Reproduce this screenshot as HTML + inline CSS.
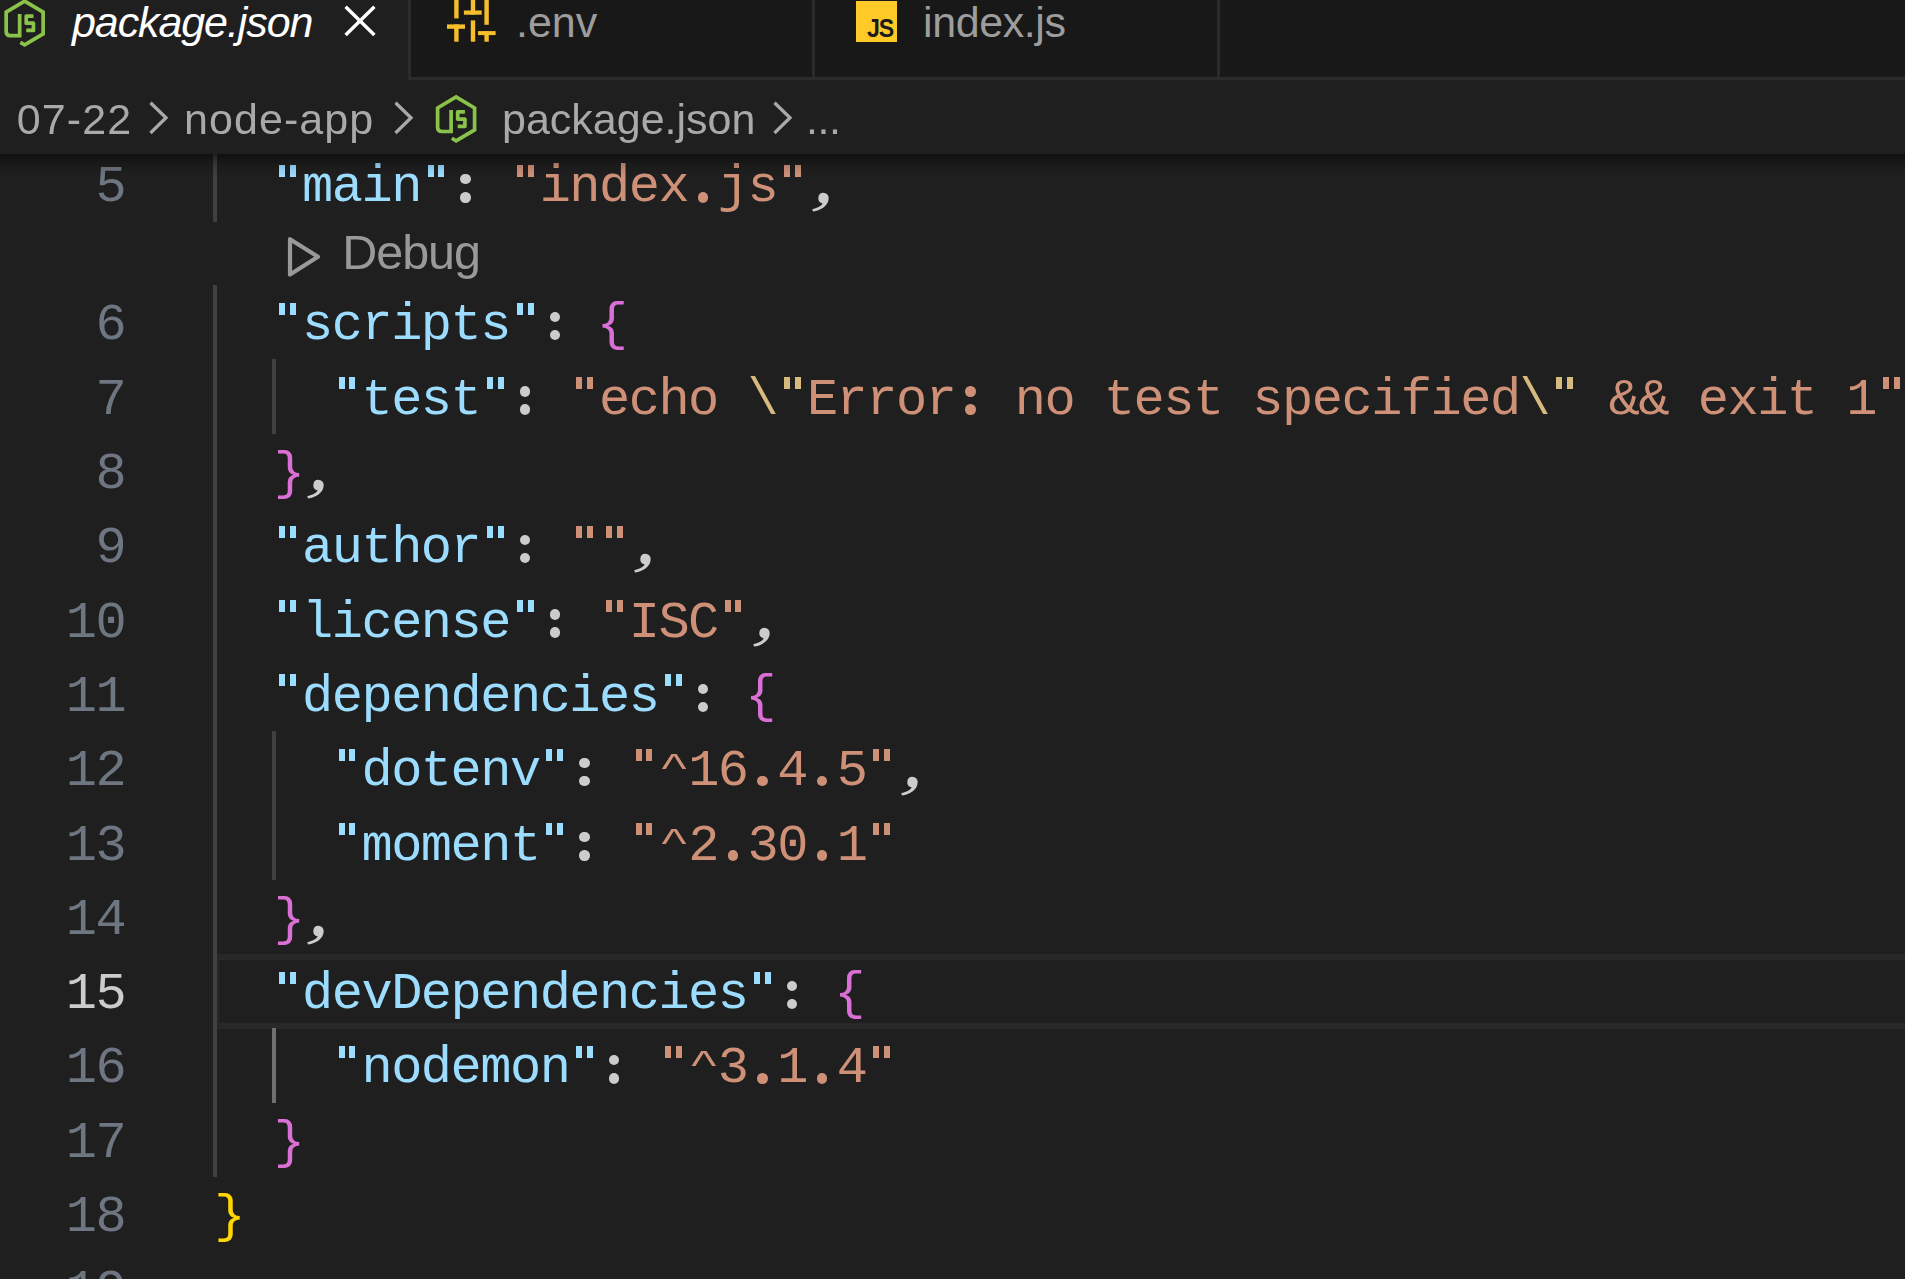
<!DOCTYPE html>
<html>
<head>
<meta charset="utf-8">
<title>package.json - node-app</title>
<style>
html,body{margin:0;padding:0;background:#1f1f1f;}
#wrap{position:absolute;left:0;top:0;width:1905px;height:1279px;overflow:hidden;filter:blur(0.7px);}
body{width:1905px;height:1279px;overflow:hidden;background:#1f1f1f;position:relative;font-family:"Liberation Sans",sans-serif;}
.abs{position:absolute;}
/* ---------- tab bar ---------- */
#tabbar{position:absolute;left:0;top:0;width:1905px;height:76.6px;background:#181818;border-bottom:3.6px solid #2b2b2b;}
#tab1{position:absolute;left:0;top:0;width:407.6px;height:80.4px;background:#1f1f1f;}
.tsep{position:absolute;top:0;width:3.6px;height:78px;background:#2b2b2b;}
.tlabel{position:absolute;white-space:pre;font-size:43px;line-height:50px;height:50px;color:#9d9d9d;}
/* ---------- breadcrumb ---------- */
.bc{position:absolute;white-space:pre;font-size:43px;line-height:50px;height:50px;color:#a9a9a9;}
/* ---------- editor ---------- */
#editor{position:absolute;left:0;top:153.8px;width:1905px;height:1126px;overflow:hidden;}
#shadow{position:absolute;left:0;top:0;width:1905px;height:21px;box-shadow:#000 0 21px 21px -21px inset;}
.ln{position:absolute;left:0;width:125.1px;text-align:right;font-family:"Liberation Mono",monospace;font-size:52px;letter-spacing:-1.51px;line-height:74.33px;height:74.33px;color:#6e7681;white-space:pre;}
.ln.act{color:#cccccc;}
.cl{position:absolute;left:213px;font-family:"Liberation Mono",monospace;font-size:52px;letter-spacing:-1.51px;line-height:74.33px;height:74.33px;color:#cccccc;white-space:pre;}
.k{color:#9cdcfe;}
.s{color:#ce9178;}
.e{color:#d7ba7d;}
.b1{color:#ffd700;}
.b2{color:#da70d6;}
.pd,.pm{display:inline-block;position:relative;color:transparent;}
.pd::after{content:"";position:absolute;left:9.9px;top:40.9px;width:10.3px;height:10.3px;border-radius:50%;background:currentColor;}
.pd.pc::before{content:"";position:absolute;left:9.9px;top:22.7px;width:10.3px;height:10.3px;border-radius:50%;background:currentColor;}
.cl .pd::after,.cl .pd::before{background:#cccccc;}
.cl .s .pd::after,.cl .s .pd::before{background:#ce9178;}
.pm svg{position:absolute;left:0;top:38.8px;overflow:visible;}
.q{display:inline-block;width:29.69px;height:36.5px;vertical-align:baseline;background:linear-gradient(currentColor,currentColor) 6.8px 0/6.3px 12.2px no-repeat,linear-gradient(currentColor,currentColor) 17.6px 0/6.3px 12.2px no-repeat;}
.cl i{font-style:normal;position:relative;}
.cl i.o{left:-2.4px;}
.cl i.c{left:1.3px;}
.ca{display:inline-block;transform-origin:0 19.2px;transform:translateY(2.4px) scaleY(0.64);}
.g{position:absolute;width:3.8px;background:#404040;}
.g.a{background:#707070;}
#curline{position:absolute;left:213px;width:1700px;height:74.33px;box-sizing:border-box;border:6.8px solid #282828;}
#dbg{font-size:48.5px;letter-spacing:-1.05px;line-height:56px;color:#999999;white-space:pre;}
</style>
</head>
<body>
<div id="wrap">

<!-- TAB BAR -->
<div id="tabbar"></div>
<div id="tab1"></div>
<div class="tsep" style="left:407.6px;"></div>
<div class="tsep" style="left:811.9px;"></div>
<div class="tsep" style="left:1216.6px;"></div>

<div class="tlabel" id="t1" style="left:72px;top:-2.6px;color:#ffffff;font-style:italic;letter-spacing:-1.09px;">package.json</div>
<div class="tlabel" id="t2" style="left:516px;top:-2.6px;">.env</div>
<div class="tlabel" id="t3" style="left:923px;top:-2.6px;letter-spacing:-0.4px;">index.js</div>

<!-- BREADCRUMB -->
<div class="bc" id="b1" style="left:16.7px;top:93.9px;letter-spacing:1.1px;">07-22</div>
<div class="bc" id="b2" style="left:184px;top:93.9px;letter-spacing:1.07px;">node-app</div>
<div class="bc" id="b3" style="left:502px;top:93.9px;">package.json</div>
<div class="bc" id="b4" style="left:806px;top:93.9px;letter-spacing:-0.5px;">...</div>

<!-- ICONS -->
<svg width="0" height="0" style="position:absolute"><defs><g id="node" fill="none" stroke="#8bc34a" stroke-width="3.7"><path d="M-4.30 19.35 L0 21.90 L18.49 10.95 L18.49 -10.95 L0 -21.90 L-18.49 -10.95 L-18.49 8.40 Q-18.49 12.60 -14.29 12.60 L-5.00 12.60 L-5.00 -8.90" stroke-linejoin="miter" stroke-miterlimit="10" stroke-linecap="butt"/><path d="M8.80 -6.95 H1.60 V0.20 H8.80 V7.40 H1.60" stroke-linejoin="round" stroke-linecap="butt"/></g><path id="comma" fill="#cccccc" d="M16.4 -9.2 a5.3 5.3 0 0 1 5.3 5.3 C21.7 3.6 14 8.6 6 9.6 L5.3 7.1 C10.5 6.1 14.6 4 15.6 1.3 a5.3 5.3 0 0 1 0.8 -10.5 Z"/><g id="chev" fill="none" stroke="#a9a9a9" stroke-width="3.3" stroke-linecap="butt" stroke-linejoin="miter"><path d="M2.5 1.8 L18 16.8 L2.5 32"/></g></defs></svg>
<svg class="abs" style="left:0;top:0;overflow:visible" width="60" height="60"><use href="#node" x="24.65" y="23"/></svg>
<svg class="abs" style="left:426px;top:88px;overflow:visible" width="60" height="62"><use href="#node" x="30.1" y="30.9"/></svg>
<svg class="abs" style="left:340px;top:0" width="40" height="42"><path d="M5.6 6.8 L34.4 35 M34.4 6.8 L5.6 35" stroke="#ffffff" stroke-width="3.4" fill="none"/></svg>
<svg class="abs" style="left:440px;top:0" width="60" height="46" fill="#f7be2c"><rect x="14.2" y="-2.0" width="4.4" height="20.4"/><rect x="7.0" y="24.4" width="18.0" height="4.4"/><rect x="14.2" y="24.4" width="4.4" height="17.3"/><rect x="30.8" y="-2.0" width="4.4" height="16.6"/><rect x="23.9" y="10.5" width="17.8" height="4.2"/><rect x="30.8" y="20.4" width="4.4" height="21.3"/><rect x="44.4" y="-2.0" width="4.4" height="26.8"/><rect x="38.0" y="31.1" width="17.6" height="4.0"/><rect x="44.4" y="31.1" width="4.4" height="10.6"/></svg>
<div class="abs" style="left:856px;top:1px;width:40.6px;height:40.6px;background:#ffca28;"></div>
<div class="abs" id="jsl" style="left:866.5px;top:15.3px;font-size:25px;line-height:26px;font-weight:bold;color:#1c1c1c;letter-spacing:-1.2px;transform:scaleX(0.93);transform-origin:0 0;">JS</div>
<svg class="abs" style="left:148.0px;top:100.5px;overflow:visible" width="22" height="36"><use href="#chev"/></svg>
<svg class="abs" style="left:393.3px;top:100.5px;overflow:visible" width="22" height="36"><use href="#chev"/></svg>
<svg class="abs" style="left:772.2px;top:100.5px;overflow:visible" width="22" height="36"><use href="#chev"/></svg>

<!-- EDITOR -->
<div id="editor">
<div id="curline" style="top:800.4px;"></div>
<div class="g" style="left:213.0px;top:0.0px;height:67.9px;"></div>
<div class="g" style="left:213.0px;top:131.4px;height:892.0px;"></div>
<div class="g" style="left:272.4px;top:205.7px;height:74.3px;"></div>
<div class="g" style="left:272.4px;top:577.4px;height:148.7px;"></div>
<div class="g a" style="left:272.4px;top:874.7px;height:74.3px;"></div>
<div class="ln" style="top:-2.40px;">5</div>
<div class="cl" id="L5" style="top:-2.40px;">  <span class="k"><span class="q"></span>main<span class="q"></span></span><span class="pd pc">:</span> <span class="s"><span class="q"></span>index<span class="pd">.</span>js<span class="q"></span></span><span class="pm">,<svg width="30" height="30" viewBox="0 -12 30 30"><use href="#comma"/></svg></span></div>
<div class="ln" style="top:135.40px;">6</div>
<div class="cl" id="L6" style="top:135.40px;">  <span class="k"><span class="q"></span>scripts<span class="q"></span></span><span class="pd pc">:</span> <span class="b2"><i class="o">{</i></span></div>
<div class="ln" style="top:209.73px;">7</div>
<div class="cl" id="L7" style="top:209.73px;">    <span class="k"><span class="q"></span>test<span class="q"></span></span><span class="pd pc">:</span> <span class="s"><span class="q"></span>echo </span><span class="e">\<span class="q"></span></span><span class="s">Error<span class="pd pc">:</span> no test specified</span><span class="e">\<span class="q"></span></span><span class="s"> &amp;&amp; exit 1<span class="q"></span></span></div>
<div class="ln" style="top:284.06px;">8</div>
<div class="cl" id="L8" style="top:284.06px;">  <span class="b2"><i class="c">}</i></span><span class="pm">,<svg width="30" height="30" viewBox="0 -12 30 30"><use href="#comma"/></svg></span></div>
<div class="ln" style="top:358.39px;">9</div>
<div class="cl" id="L9" style="top:358.39px;">  <span class="k"><span class="q"></span>author<span class="q"></span></span><span class="pd pc">:</span> <span class="s"><span class="q"></span><span class="q"></span></span><span class="pm">,<svg width="30" height="30" viewBox="0 -12 30 30"><use href="#comma"/></svg></span></div>
<div class="ln" style="top:432.72px;">10</div>
<div class="cl" id="L10" style="top:432.72px;">  <span class="k"><span class="q"></span>license<span class="q"></span></span><span class="pd pc">:</span> <span class="s"><span class="q"></span>ISC<span class="q"></span></span><span class="pm">,<svg width="30" height="30" viewBox="0 -12 30 30"><use href="#comma"/></svg></span></div>
<div class="ln" style="top:507.05px;">11</div>
<div class="cl" id="L11" style="top:507.05px;">  <span class="k"><span class="q"></span>dependencies<span class="q"></span></span><span class="pd pc">:</span> <span class="b2"><i class="o">{</i></span></div>
<div class="ln" style="top:581.38px;">12</div>
<div class="cl" id="L12" style="top:581.38px;">    <span class="k"><span class="q"></span>dotenv<span class="q"></span></span><span class="pd pc">:</span> <span class="s"><span class="q"></span><span class="ca">^</span>16<span class="pd">.</span>4<span class="pd">.</span>5<span class="q"></span></span><span class="pm">,<svg width="30" height="30" viewBox="0 -12 30 30"><use href="#comma"/></svg></span></div>
<div class="ln" style="top:655.71px;">13</div>
<div class="cl" id="L13" style="top:655.71px;">    <span class="k"><span class="q"></span>moment<span class="q"></span></span><span class="pd pc">:</span> <span class="s"><span class="q"></span><span class="ca">^</span>2<span class="pd">.</span>30<span class="pd">.</span>1<span class="q"></span></span></div>
<div class="ln" style="top:730.04px;">14</div>
<div class="cl" id="L14" style="top:730.04px;">  <span class="b2"><i class="c">}</i></span><span class="pm">,<svg width="30" height="30" viewBox="0 -12 30 30"><use href="#comma"/></svg></span></div>
<div class="ln act" style="top:804.37px;">15</div>
<div class="cl" id="L15" style="top:804.37px;">  <span class="k"><span class="q"></span>devDependencies<span class="q"></span></span><span class="pd pc">:</span> <span class="b2"><i class="o">{</i></span></div>
<div class="ln" style="top:878.70px;">16</div>
<div class="cl" id="L16" style="top:878.70px;">    <span class="k"><span class="q"></span>nodemon<span class="q"></span></span><span class="pd pc">:</span> <span class="s"><span class="q"></span><span class="ca">^</span>3<span class="pd">.</span>1<span class="pd">.</span>4<span class="q"></span></span></div>
<div class="ln" style="top:953.03px;">17</div>
<div class="cl" id="L17" style="top:953.03px;">  <span class="b2"><i class="c">}</i></span></div>
<div class="ln" style="top:1027.36px;">18</div>
<div class="cl" id="L18" style="top:1027.36px;"><span class="b1"><i class="c">}</i></span></div>
<div class="ln" style="top:1101.69px;">19</div>
<svg class="abs" style="left:286px;top:81.0px;" width="38" height="44" viewBox="0 0 38 44"><path d="M4 4.2 L32 21.8 L4 39.6 Z" fill="none" stroke="#999999" stroke-width="4.2" stroke-linejoin="round"/></svg>
<div id="dbg" class="abs" style="left:342.3px;top:70.2px;">Debug</div>
<div id="shadow"></div>
</div>

</div>
</body>
</html>
